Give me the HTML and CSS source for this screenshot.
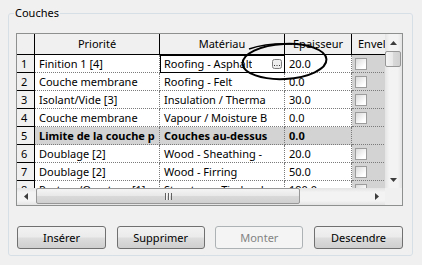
FILE: index.html
```html
<!DOCTYPE html>
<html lang="fr">
<head>
  <meta charset="UTF-8">
  <title>Couches</title>
  <link rel="stylesheet" href="styles.css">
</head>
<body>
  <fieldset class="group">
    <legend>Couches</legend>

    <div class="table-wrap">
      <div class="cells">
        <div class="sheet">
          <div class="hd"></div>
          <div class="hd">Priorité</div>
          <div class="hd">Matériau</div>
          <div class="hd">Epaisseur</div>
          <div class="hd last">Envel</div>

          <div class="num">1</div>
          <div>Finition 1 [4]</div>
          <div class="active"><span class="txt">Roofing - Asphalt</span><span class="dots"><svg width="10" height="10" viewBox="0 0 10 10"><rect x="0.5" y="0.5" width="9" height="9" rx="2" fill="#eee" stroke="#7c7c7c"/><rect x="2" y="6" width="1" height="1" fill="#333"/><rect x="4.5" y="6" width="1" height="1" fill="#333"/><rect x="7" y="6" width="1" height="1" fill="#333"/></svg></span></div>
          <div>20.0</div>
          <div class="off"><span class="box"></span></div>

          <div class="num">2</div>
          <div>Couche membrane</div>
          <div>Roofing - Felt</div>
          <div>0.0</div>
          <div class="off"><span class="box"></span></div>

          <div class="num">3</div>
          <div>Isolant/Vide [3]</div>
          <div>Insulation / Therma</div>
          <div>30.0</div>
          <div class="off"><span class="box"></span></div>

          <div class="num">4</div>
          <div>Couche membrane</div>
          <div>Vapour / Moisture B</div>
          <div>0.0</div>
          <div class="off"><span class="box"></span></div>

          <div class="num">5</div>
          <div class="off bold">Limite de la couche p</div>
          <div class="off bold">Couches au-dessus</div>
          <div class="off bold">0.0</div>
          <div class="off"></div>

          <div class="num">6</div>
          <div>Doublage [2]</div>
          <div>Wood - Sheathing -</div>
          <div>20.0</div>
          <div class="off"><span class="box"></span></div>

          <div class="num">7</div>
          <div>Doublage [2]</div>
          <div>Wood - Firring</div>
          <div>50.0</div>
          <div class="off"><span class="box"></span></div>

          <div class="num">8</div>
          <div>Porteur/Ossature [1]</div>
          <div>Structure - Timber J</div>
          <div>190.0</div>
          <div class="off"><span class="box"></span></div>
        </div>
      </div>

      <div class="vscroll">
        <div class="arrow"><svg width="7" height="4"><path d="M3.5 0L7 4H0z" fill="#3d3d3d"/></svg></div>
        <div class="thumb vthumb"></div>
        <div class="spacer"></div>
        <div class="arrow"><svg width="7" height="4"><path d="M0 0H7L3.5 4z" fill="#3d3d3d"/></svg></div>
      </div>

      <div class="hscroll">
        <div class="arrow"><svg width="4" height="7"><path d="M0 3.5L4 0V7z" fill="#3d3d3d"/></svg></div>
        <div class="thumb hthumb"><span class="grip"></span></div>
        <div class="spacer"></div>
        <div class="arrow"><svg width="4" height="7"><path d="M0 0L4 3.5L0 7z" fill="#3d3d3d"/></svg></div>
      </div>

      <div class="corner"></div>

      <svg class="circle" width="387" height="173">
        <ellipse cx="267.5" cy="27.5" rx="42" ry="17.5" transform="rotate(-3 267.5 27.5)" fill="none" stroke="#000" stroke-width="2"/>
        <path d="M232 15 Q250 9 275 10" fill="none" stroke="#000" stroke-width="1.5"/>
      </svg>
    </div>

    <div class="buttons">
      <button class="btn wide">Insérer</button>
      <button class="btn">Supprimer</button>
      <button class="btn" disabled>Monter</button>
      <button class="btn wide">Descendre</button>
    </div>
  </fieldset>
</body>
</html>
```

FILE: styles.css
```css
body {
  margin: 0;
  background: #f0f0f0;
  font-family: "Noto Sans", sans-serif;
  font-size: 11px;
  color: #000;
}

.group {
  margin: 6px 9px 0 8px;
  padding: 13px 9px 6px 7px;
  border: 1px solid #d5dfe5;
  border-radius: 3px;
  min-width: 0;
}

.group legend {
  padding: 0 1px;
  margin-left: -2px;
  line-height: 14px;
}

.table-wrap {
  position: relative;
  display: grid;
  grid-template-columns: 368px 17px;
  grid-template-rows: 154px 17px;
  border: 1px solid #8e8f8f;
  background: #fff;
}

.cells {
  overflow: hidden;
}

.sheet {
  display: grid;
  grid-template-columns: 18px 125px 125px 67px 70px;
  grid-template-rows: 21px;
  grid-auto-rows: 18px;
}

.sheet > div {
  box-sizing: border-box;
  white-space: nowrap;
  overflow: hidden;
  padding: 0 4px;
  line-height: 17px;
  background: #fff;
  border-right: 1px dotted #7a7a7a;
  border-bottom: 1px dotted #7a7a7a;
}

.sheet > .hd {
  line-height: 20px;
  text-align: center;
  background: #f0f0f0;
  border-right: 1px solid #000;
  border-bottom: 1px solid #000;
}

.sheet > .hd.last {
  text-align: left;
  padding-left: 6px;
}

.sheet > .num {
  background: #f0f0f0;
  border-right: 1px solid #000;
  border-bottom: 1px solid #000;
}

.sheet > .off {
  background: #d3d3d3;
}

.sheet > .bold {
  font-weight: bold;
}

.sheet > .active {
  display: flex;
  justify-content: space-between;
  align-items: center;
  padding-right: 2px;
  outline: 1px solid #000;
  outline-offset: -1px;
}

.active .txt {
  overflow: hidden;
}

.active .dots {
  display: flex;
  flex: none;
}

.box {
  display: block;
  box-sizing: border-box;
  width: 12px;
  height: 12px;
  margin: 3px 0 0 -1px;
  border: 1px solid #9c9c9c;
  background: linear-gradient(135deg, #d9d9d9, #ffffff 75%);
}

.vscroll {
  display: flex;
  flex-direction: column;
  background: linear-gradient(90deg, #e4e4e4, #f3f3f3 25%, #f3f3f3 75%, #e4e4e4);
}

.hscroll {
  display: flex;
  background: linear-gradient(#e4e4e4, #f3f3f3 25%, #f3f3f3 75%, #e4e4e4);
}

.arrow {
  flex: none;
  width: 17px;
  height: 17px;
  display: flex;
  align-items: center;
  justify-content: center;
}

.spacer {
  flex: 1;
}

.thumb {
  box-sizing: border-box;
  flex: none;
  border: 1px solid #979797;
  border-radius: 2px;
}

.vthumb {
  height: 16px;
  margin-right: 1px;
  background: linear-gradient(90deg, #f4f4f4, #e8e8e8 50%, #d9d9d9 51%, #d0d0d0);
}

.hthumb {
  width: 264px;
  height: 16px;
  margin-left: 2px;
  display: flex;
  align-items: center;
  justify-content: center;
  background: linear-gradient(#f4f4f4, #e8e8e8 50%, #d9d9d9 51%, #d0d0d0);
}

.grip {
  width: 7px;
  height: 7px;
  background: repeating-linear-gradient(90deg, #616161 0 1px, #f6f6f6 1px 2px, transparent 2px 3px);
}

.corner {
  background: #f0f0f0;
}

.circle {
  position: absolute;
  left: 0;
  top: 0;
  pointer-events: none;
  overflow: visible;
}

.buttons {
  display: flex;
  justify-content: space-between;
  margin-top: 20px;
  padding-left: 1px;
}

.btn {
  box-sizing: border-box;
  width: 88px;
  height: 23px;
  padding: 0;
  border: 1px solid #707070;
  border-radius: 3px;
  background: linear-gradient(#f2f2f2, #ebebeb 48%, #dddddd 52%, #cfcfcf);
  font-family: inherit;
  font-size: 11px;
  color: #000;
}

.btn.wide {
  width: 89px;
}

.btn:disabled {
  border-color: #adb2b5;
  background: #f4f4f4;
  color: #838383;
}
```
